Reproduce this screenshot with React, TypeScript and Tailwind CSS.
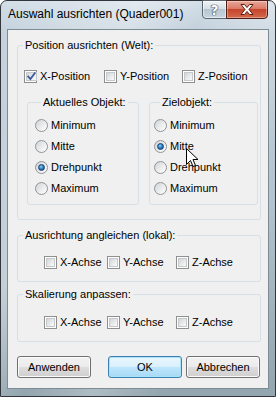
import React from "react";

function Check({ checked }: { checked?: boolean }) {
  return (
    <span className="w-[13px] h-[13px] shrink-0 border border-[#8e8f8f] bg-white p-[1px] flex">
      <span className="flex-1 border border-[#c6c9cc] bg-[linear-gradient(135deg,#d3d5d8_0%,#e9eaeb_55%,#fbfbfb_100%)] flex items-center justify-center">
        {checked && (
          <svg width="9" height="9" viewBox="0 0 9 9" className="-mt-[1px]">
            <path d="M1.2 4.6 L3.4 7 L7.8 1.2" fill="none" stroke="#3a5a98" strokeWidth="1.8" strokeLinecap="square" />
          </svg>
        )}
      </span>
    </span>
  );
}

function Radio({ checked }: { checked?: boolean }) {
  return (
    <span className="w-[13px] h-[13px] shrink-0 rounded-full border border-[#8f9498] bg-[linear-gradient(135deg,#d0d3d6_0%,#eceded_55%,#ffffff_100%)] flex items-center justify-center">
      {checked && (
        <span className="w-[7px] h-[7px] rounded-full border border-[#1b3f72] bg-[radial-gradient(circle_at_40%_35%,#8fd0f5_0%,#2e85c6_45%,#0f3f7a_100%)]" />
      )}
    </span>
  );
}

function CheckItem({ label, checked, w }: { label: string; checked?: boolean; w: string }) {
  return (
    <div className={`flex items-center gap-[3px] h-[13px] ${w}`}>
      <Check checked={checked} />
      <span className="leading-[13px] whitespace-nowrap">{label}</span>
    </div>
  );
}

function RadioItem({ label, checked }: { label: string; checked?: boolean }) {
  return (
    <div className="flex items-center gap-[3px] h-[21px]">
      <Radio checked={checked} />
      <span className="leading-[13px] whitespace-nowrap">{label}</span>
    </div>
  );
}

function Btn({ label, def }: { label: string; def?: boolean }) {
  return (
    <div
      className={
        def
          ? "w-[74px] h-[22px] rounded-[3px] border border-[#3c7fb1] shadow-[inset_0_0_0_1px_#a8e3fa] bg-[linear-gradient(to_bottom,#eaf6fd_0%,#d9f0fc_50%,#bee6fd_51%,#a7d9f5_100%)] flex items-center justify-center"
          : "w-[74px] h-[22px] rounded-[3px] border border-[#707070] shadow-[inset_0_0_0_1px_#fbfbfb] bg-[linear-gradient(to_bottom,#f2f2f2_0%,#ebebeb_50%,#dddddd_51%,#cfcfcf_100%)] flex items-center justify-center"
      }
    >
      <span className="leading-[13px]">{label}</span>
    </div>
  );
}

export default function App() {
  return (
    <div className="w-[276px] h-[397px] relative font-['Liberation_Sans',Arial,sans-serif] text-[11px] text-black">
      <div className="w-full h-full flex flex-col rounded-t-[7px] border border-[#30363b] bg-[linear-gradient(115deg,rgba(255,255,255,0)_0%,rgba(255,255,255,0.35)_30%,rgba(255,255,255,0)_45%,rgba(255,255,255,0.25)_60%,rgba(255,255,255,0)_75%),linear-gradient(to_bottom,#d3dee7_0%,#c2d0db_8%,#b3c3cf_50%,#93a5ae_100%)] px-[6px] pb-[7px]">
        {/* title bar */}
        <div className="h-[28px] flex items-start justify-between">
          <div className="pl-[1px] pt-[6px] text-[12px] leading-[15px] whitespace-nowrap">Auswahl ausrichten (Quader001)</div>
          <div className="flex -mt-[1px] mr-[1px]">
            <div className="w-[25px] h-[19px] rounded-bl-[4px] border border-[#5b6670] bg-[linear-gradient(to_bottom,#f0f4f7_0%,#d6dfe6_45%,#b7c6d1_50%,#c9d6de_100%)] shadow-[inset_0_0_0_1px_rgba(255,255,255,0.5)] flex items-center justify-center">
              <span className="font-['DejaVu_Sans',sans-serif] font-bold text-[14px] leading-[14px] text-white [text-shadow:0_0_1px_#2b3640,0_0_1px_#2b3640,0_0_1px_#2b3640]">?</span>
            </div>
            <div className="w-[42px] h-[19px] -ml-[1px] rounded-br-[4px] border border-[#4d1d14] bg-[linear-gradient(to_bottom,#e9a899_0%,#d97b66_45%,#c7452c_50%,#d2684d_100%)] shadow-[inset_0_0_0_1px_rgba(255,255,255,0.35)] flex items-center justify-center">
              <svg width="14" height="11" viewBox="0 0 14 11">
                <path d="M1 0.5 H4.5 L7 3.5 L9.5 0.5 H13 L9 5.5 L13 10.5 H9.5 L7 7.5 L4.5 10.5 H1 L5 5.5 Z" fill="#ffffff" stroke="#5a1a0e" strokeWidth="1" strokeLinejoin="round" />
              </svg>
            </div>
          </div>
        </div>
        {/* client */}
        <div className="flex-1 border border-[#7d8b94] bg-[#f0f0f0] flex flex-col">
          <fieldset className="ml-[9px] mt-[9px] w-[244px] border border-[#d5dfe5] rounded-[3px] pb-[14px]">
            <legend className="ml-[5px] px-[2px] leading-[13px]">Position ausrichten (Welt):</legend>
            <div className="flex mt-[18px] pl-[6px]">
              <CheckItem label="X-Position" checked w="w-[80px]" />
              <CheckItem label="Y-Position" w="w-[78px]" />
              <CheckItem label="Z-Position" w="w-[70px]" />
            </div>
            <div className="flex mt-[13px]">
              <fieldset className="ml-[9px] w-[112px] border border-[#d5dfe5] rounded-[3px] pb-[5px] pl-[7px]">
                <legend className="ml-[6px] px-[2px] leading-[13px]">Aktuelles Objekt:</legend>
                <div className="flex flex-col mt-[6px]">
                  <RadioItem label="Minimum" />
                  <RadioItem label="Mitte" />
                  <RadioItem label="Drehpunkt" checked />
                  <RadioItem label="Maximum" />
                </div>
              </fieldset>
              <fieldset className="ml-[10px] w-[109px] border border-[#d5dfe5] rounded-[3px] pb-[5px] pl-[4px]">
                <legend className="ml-[6px] px-[2px] leading-[13px]">Zielobjekt:</legend>
                <div className="flex flex-col mt-[6px]">
                  <RadioItem label="Minimum" />
                  <RadioItem label="Mitte" checked />
                  <RadioItem label="Drehpunkt" />
                  <RadioItem label="Maximum" />
                </div>
              </fieldset>
            </div>
          </fieldset>

          <fieldset className="ml-[9px] mt-[9px] w-[244px] border border-[#d5dfe5] rounded-[3px] pb-[12px]">
            <legend className="ml-[5px] px-[2px] leading-[13px]">Ausrichtung angleichen (lokal):</legend>
            <div className="flex mt-[14px] pl-[26px]">
              <CheckItem label="X-Achse" w="w-[63px]" />
              <CheckItem label="Y-Achse" w="w-[69px]" />
              <CheckItem label="Z-Achse" w="w-[60px]" />
            </div>
          </fieldset>

          <fieldset className="ml-[9px] mt-[6px] w-[244px] border border-[#d5dfe5] rounded-[3px] pb-[12px]">
            <legend className="ml-[5px] px-[2px] leading-[13px]">Skalierung anpassen:</legend>
            <div className="flex mt-[15px] pl-[26px]">
              <CheckItem label="X-Achse" w="w-[63px]" />
              <CheckItem label="Y-Achse" w="w-[69px]" />
              <CheckItem label="Z-Achse" w="w-[60px]" />
            </div>
          </fieldset>

          <div className="flex mt-[14px] ml-[9px]">
            <Btn label="Anwenden" />
            <div className="ml-[17px]">
              <Btn label="OK" def />
            </div>
            <div className="ml-[4px]">
              <Btn label="Abbrechen" />
            </div>
          </div>
        </div>
      </div>
      {/* mouse cursor */}
      <svg className="absolute left-[186px] top-[148px]" width="13" height="20" viewBox="0 0 13 20">
        <path d="M0.5 0.5 L0.5 16.5 L4.5 12.5 L7 18.5 L9.5 17.5 L7 11.5 L12 11.5 Z" fill="#ffffff" stroke="#000000" strokeWidth="1" strokeLinejoin="miter" />
      </svg>
    </div>
  );
}
